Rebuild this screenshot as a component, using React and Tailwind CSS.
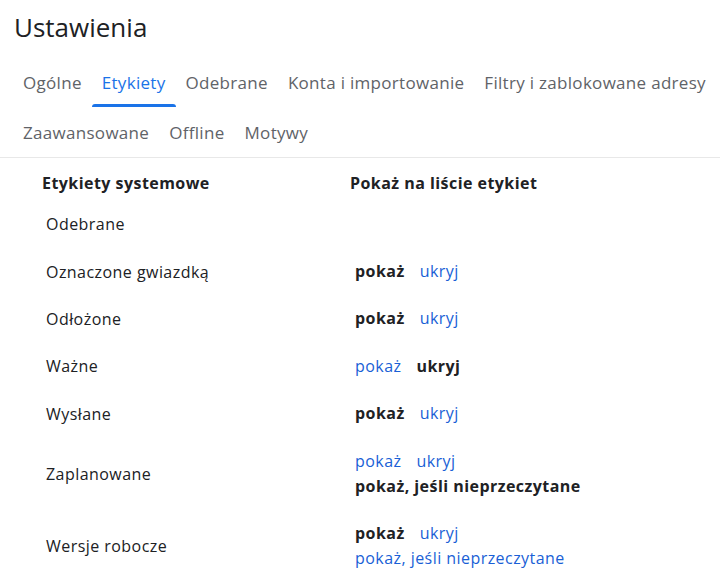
import React from "react";

const F = { fontFamily: '"Open Sans", "Noto Sans", Arial, sans-serif' };

function Tab({ label, active }) {
  return (
    <div className="relative flex items-center px-[10px]">
      <span className={active ? "text-[#1a73e8]" : "text-[#5f6368]"}>{label}</span>
      {active && <div className="absolute bottom-[1px] left-0 right-0 h-[3px] rounded-t-[3px] bg-[#1a73e8]" />}
    </div>
  );
}

const B = ({ children }) => <span className="font-bold text-[#202124]">{children}</span>;
const L = ({ children }) => <span className="text-[#1a5fd6]">{children}</span>;

function Row({ label, h, children }) {
  return (
    <div className={`flex items-center ${h}`}>
      <div className="w-[355px] shrink-0 pl-[46px] text-[#202124]">{label}</div>
      <div className="flex flex-col leading-[25px]">{children}</div>
    </div>
  );
}

export default function App() {
  return (
    <div style={F} className="h-[576px] w-[720px] overflow-hidden bg-white text-[16px] tracking-[0.45px]">
      <div className="pl-[14px] pt-[11px] text-[26px] leading-[32px] tracking-normal text-[#202124]">Ustawienia</div>
      <div className="mt-[15px] pl-[13px] text-[17px] tracking-[0.3px]">
        <div className="flex h-[50px]">
          <Tab label="Ogólne" />
          <Tab label="Etykiety" active />
          <Tab label="Odebrane" />
          <Tab label="Konta i importowanie" />
          <Tab label="Filtry i zablokowane adresy" />
        </div>
        <div className="flex h-[49px]">
          <Tab label="Zaawansowane" />
          <Tab label="Offline" />
          <Tab label="Motywy" />
        </div>
      </div>
      <div className="h-[1px] bg-[#e8e8e8]" />
      <div className="flex h-[42px] pt-[15px] font-bold leading-[20px] text-[#202124]">
        <div className="w-[350px] shrink-0 pl-[42px]">Etykiety systemowe</div>
        <div>Pokaż na liście etykiet</div>
      </div>
      <Row label="Odebrane" h="h-[48px]" />
      <Row label="Oznaczone gwiazdką" h="h-[47px]">
        <div className="flex gap-[15px]"><B>pokaż</B><L>ukryj</L></div>
      </Row>
      <Row label="Odłożone" h="h-[47px]">
        <div className="flex gap-[15px]"><B>pokaż</B><L>ukryj</L></div>
      </Row>
      <Row label="Ważne" h="h-[48px]">
        <div className="flex gap-[15px]"><L>pokaż</L><B>ukryj</B></div>
      </Row>
      <Row label="Wysłane" h="h-[47px]">
        <div className="flex gap-[15px]"><B>pokaż</B><L>ukryj</L></div>
      </Row>
      <Row label="Zaplanowane" h="h-[74px]">
        <div className="flex gap-[15px]"><L>pokaż</L><L>ukryj</L></div>
        <B>pokaż, jeśli nieprzeczytane</B>
      </Row>
      <Row label="Wersje robocze" h="h-[70px]">
        <div className="flex gap-[15px]"><B>pokaż</B><L>ukryj</L></div>
        <L>pokaż, jeśli nieprzeczytane</L>
      </Row>
    </div>
  );
}
